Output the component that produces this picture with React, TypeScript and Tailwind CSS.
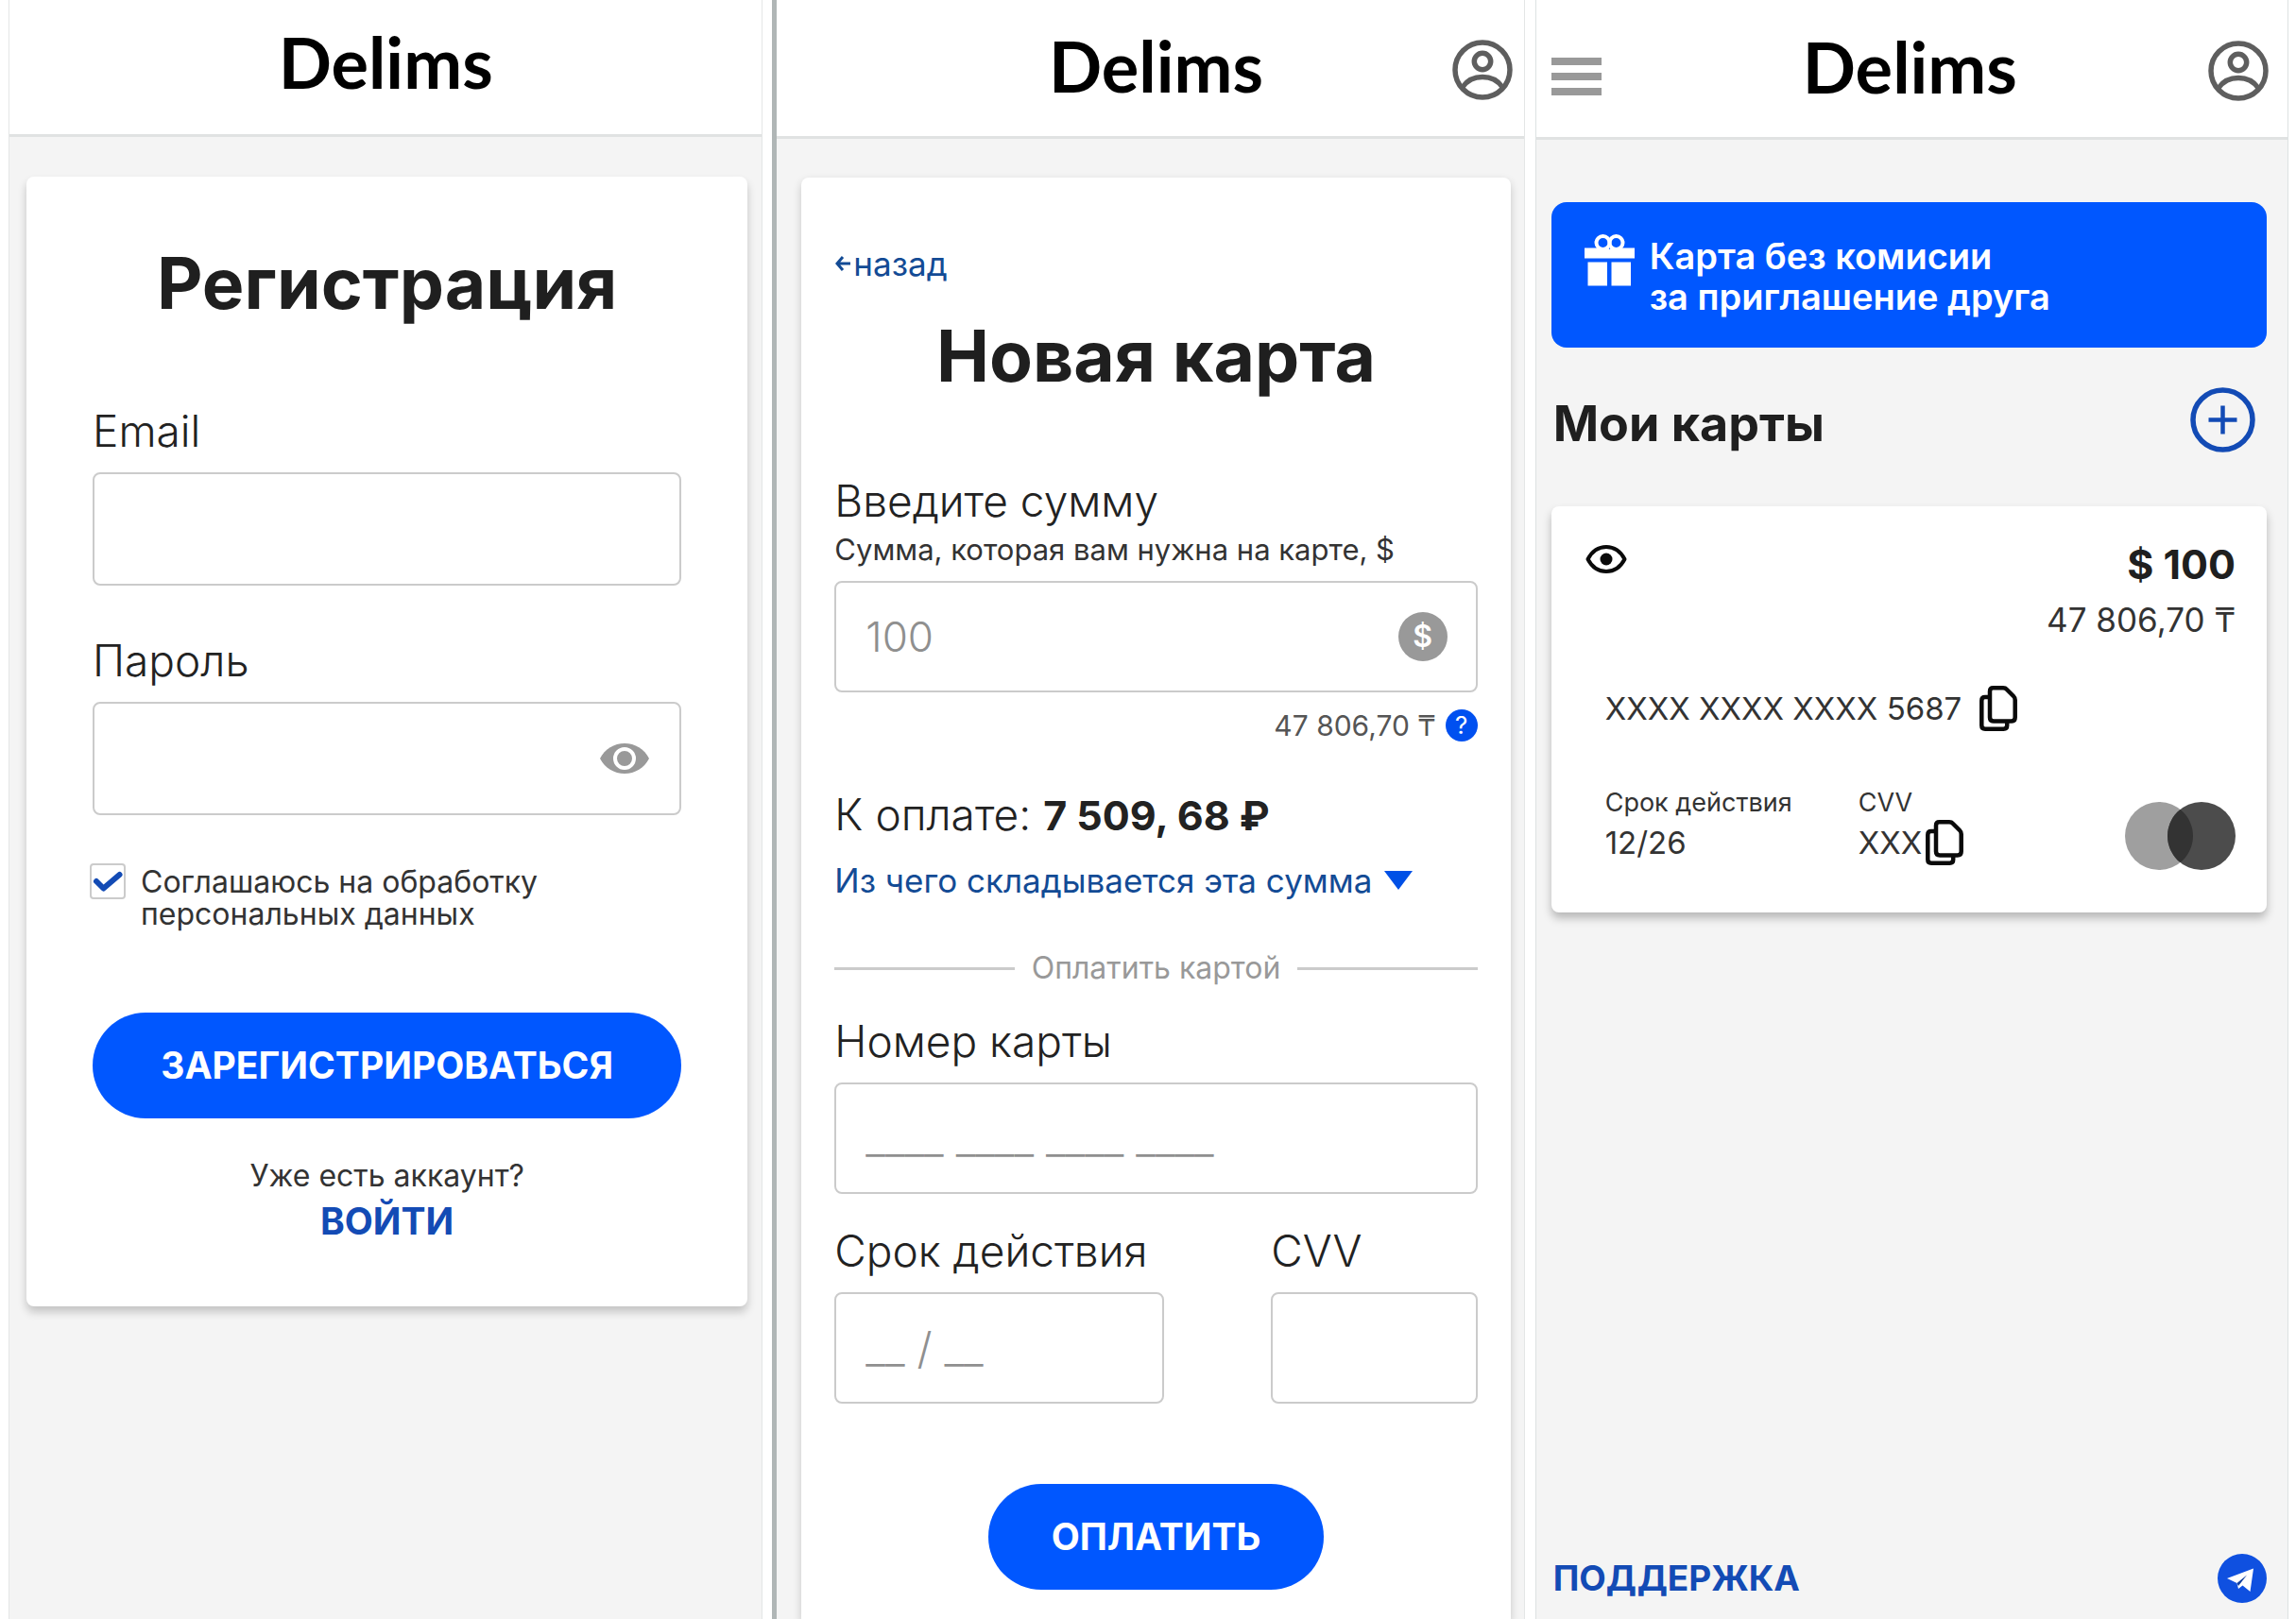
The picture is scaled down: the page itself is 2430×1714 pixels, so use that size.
import type { ReactNode } from "react";

const fieldClass =
  "block w-full rounded-lg border-2 border-[#cbcbcb] bg-white px-[31px] font-light text-[#222] outline-none placeholder:text-[#8f8f8f]";
const labelClass = "block text-[46px] leading-[56px] font-light text-[#222]";

function UserIcon() {
  return (
    <svg viewBox="0 0 64 64" className="size-16" fill="none" stroke="#5e5e5e" strokeWidth="5.5">
      <circle cx="32" cy="32" r="29" />
      <circle cx="32" cy="23" r="8.7" />
      <path d="M11 50C21 36 43 36 53 50" />
    </svg>
  );
}

function MenuIcon() {
  return (
    <svg viewBox="0 0 53 40" className="h-10 w-[53px]" fill="#999">
      <rect width="53" height="8" />
      <rect y="16" width="53" height="8" />
      <rect y="32" width="53" height="8" />
    </svg>
  );
}

function FilledEyeIcon() {
  return (
    <svg viewBox="0 0 52 32" className="h-8 w-[52px]">
      <path d="M0 16C5 6 15 0 26 0S47 6 52 16C47 26 37 32 26 32S5 26 0 16Z" fill="#999" />
      <circle cx="26" cy="16" r="10" fill="none" stroke="#fff" strokeWidth="4" />
    </svg>
  );
}

function EyeIcon() {
  return (
    <svg viewBox="0 0 44 32" className="h-8 w-11">
      <path
        d="M2.5 16C7 7.5 14 3 22 3S37 7.5 41.5 16C37 24.5 30 29 22 29S7 24.5 2.5 16Z"
        fill="none"
        stroke="#0a0a0a"
        strokeWidth="4"
        strokeLinejoin="round"
      />
      <circle cx="22" cy="16" r="6.5" fill="#0a0a0a" />
    </svg>
  );
}

function GiftIcon() {
  return (
    <svg viewBox="0 0 53 55" className="h-[55px] w-[53px] shrink-0" fill="#fff">
      <path d="M0 14.5H24.8L26.5 16L28.2 14.5H53V25.5H0Z" />
      <rect x="3.5" y="29.5" width="20.5" height="25" />
      <rect x="28.5" y="29.5" width="20.5" height="25" />
      <g fill="none" stroke="#fff" strokeWidth="4">
        <circle cx="19.5" cy="9" r="7" />
        <circle cx="33.5" cy="9" r="7" />
      </g>
    </svg>
  );
}

function CopyIcon() {
  return (
    <svg viewBox="0 0 40 48" className="h-12 w-10" fill="none" stroke="#0a0a0a" strokeWidth="4.5" strokeLinejoin="round">
      <path d="M14.5 2.3H25Q27.5 2.3 29 4L36 11Q37.7 12.7 37.7 15V33.5Q37.7 37.5 33.7 37.5H15Q11 37.5 11 33.5V6Q11 2.3 14.500 2.3Z" />
      <path d="M11 12H6Q2.3 12 2.3 15.700V42Q2.300 45.700 6 45.700H25.500Q29.200 45.700 29.200 42V38" />
    </svg>
  );
}

function CheckboxField({ children }: { children: ReactNode }) {
  return (
    <label className="mt-[51px] -ml-[3px] flex items-start gap-4">
      <span className="relative block size-[38px] shrink-0">
        <input
          type="checkbox"
          defaultChecked
          className="peer block size-full appearance-none rounded-sm border-2 border-[#cbcbcb] bg-white"
        />
        <svg
          viewBox="0 0 38 38"
          className="pointer-events-none absolute inset-0 hidden size-full peer-checked:block"
          fill="none"
          stroke="#134bb5"
          strokeWidth="6"
          strokeLinecap="round"
          strokeLinejoin="round"
        >
          <path d="M7 19L14.500 26.500L31.500 12" />
        </svg>
      </span>
      <span className="pt-[3px] text-[32px] leading-[34px] text-[#333]">{children}</span>
    </label>
  );
}

function Header({ left, right, className }: { left?: ReactNode; right?: ReactNode; className: string }) {
  return (
    <header className={`grid shrink-0 grid-cols-[1fr_auto_1fr] items-center border-b-[3px] border-[#e0e2e2] bg-white ${className}`}>
      <div>{left}</div>
      <div className="font-['Lato',sans-serif] text-[74px] leading-[88px] font-bold text-black">Delims</div>
      <div className="flex justify-end">{right}</div>
    </header>
  );
}

function RegistrationScreen() {
  return (
    <section className="flex min-w-0 flex-[798_1_0%] flex-col border-x border-[#e4e6e6] bg-[#f4f4f4]">
      <Header className="h-[145px] pb-[10px]" />
      <div className="mt-[42px] mr-[15px] ml-[18px] rounded-lg bg-white px-[70px] pt-[73px] pb-[66px] shadow-[0_6px_10px_rgba(0,0,0,0.2)]">
        <h1 className="text-center text-[75px] leading-[80px] font-bold whitespace-nowrap text-[#1f1f1f]">Регистрация</h1>
        <label htmlFor="email" className={`${labelClass} mt-[88px]`}>Email</label>
        <input id="email" type="email" className={`${fieldClass} mt-4 h-[120px] text-[44px]`} />
        <label htmlFor="password" className={`${labelClass} mt-[51px]`}>Пароль</label>
        <div className="relative mt-4">
          <input id="password" type="password" className={`${fieldClass} h-[120px] text-[44px]`} />
          <button type="button" aria-label="Показать пароль" className="absolute inset-y-0 right-[34px]">
            <FilledEyeIcon />
          </button>
        </div>
        <CheckboxField>
          Соглашаюсь на обработку
          <br />
          персональных данных
        </CheckboxField>
        <button
          type="button"
          className="mt-[87px] block h-28 w-full rounded-full bg-[#0057ff] text-[39px] font-bold whitespace-nowrap text-white"
        >
          ЗАРЕГИСТРИРОВАТЬСЯ
        </button>
        <p className="mt-[41px] text-center text-[32px] leading-[40px] text-[#333]">Уже есть аккаунт?</p>
        <p className="mt-1 text-center">
          <a href="#login" className="text-[39px] leading-[48px] font-bold text-[#134bb5]">ВОЙТИ</a>
        </p>
      </div>
    </section>
  );
}

function PaymentScreen() {
  return (
    <section className="flex min-w-0 flex-[792_1_0%] flex-col border-r border-[#e4e6e6] bg-[#f4f4f4]">
      <Header
        className="h-[147px] pr-3 pb-1 pl-6"
        right={
          <button type="button" aria-label="Профиль" className="mt-2">
            <UserIcon />
          </button>
        }
      />
      <div className="mt-[41px] mr-[14px] ml-[26px] flex grow flex-col rounded-t-lg bg-white px-[35px] pt-[66px] pb-8 shadow-[0_4px_10px_rgba(0,0,0,0.18)]">
        <a href="#back" className="self-start text-[35px] leading-[44px] text-[#134b95]">
          <span className="inline-flex items-center gap-[2px]">
            <svg viewBox="0 0 18 20" className="h-5 w-[18px]" fill="none" stroke="currentColor" strokeWidth="3">
              <path d="M9 3L3 10L9 17M3 10H17" />
            </svg>
            назад
          </span>
        </a>
        <h1 className="mt-9 text-center text-[75px] leading-[80px] font-bold whitespace-nowrap text-[#1f1f1f]">Новая карта</h1>
        <label htmlFor="amount" className={`${labelClass} mt-[85px]`}>Введите сумму</label>
        <p id="amount-hint" className="mt-1 text-[31px] leading-[40px] whitespace-nowrap text-[#333]">Сумма, которая вам нужна на карте, $</p>
        <div className="relative mt-[13px]">
          <input id="amount" aria-describedby="amount-hint" placeholder="100" className={`${fieldClass} h-[118px] text-[44px]`} />
          <span className="absolute inset-y-0 right-8 flex items-center">
            <span className="flex size-[52px] items-center justify-center rounded-full bg-[#999] text-[32px] font-semibold text-white">$</span>
          </span>
        </div>
        <div className="mt-[18px] flex items-center justify-end gap-[10px] text-[30px] leading-[34px] text-[#555]">
          47 806,70 ₸
          <button
            type="button"
            aria-label="Справка"
            className="flex size-[34px] items-center justify-center rounded-full bg-[#0050f0] text-[26px] leading-none text-white"
          >
            ?
          </button>
        </div>
        <p className={`${labelClass} mt-[49px] whitespace-nowrap`}>
          К оплате: <b className="text-[43px] font-bold">7 509, 68 ₽</b>
        </p>
        <button
          type="button"
          className="mt-[19px] flex items-center gap-[13px] self-start text-[35px] leading-[44px] whitespace-nowrap text-[#134b95]"
        >
          Из чего складывается эта сумма
          <svg viewBox="0 0 30 20" className="h-5 w-[30px]" fill="#0050e6">
            <path d="M0 0H30L15 20Z" />
          </svg>
        </button>
        <div className="mt-[51px] flex items-center gap-[18px] text-[32px] leading-[40px] text-[#999]">
          <span className="h-[3px] grow bg-[#cbcbcb]" />
          Оплатить картой
          <span className="h-[3px] grow bg-[#cbcbcb]" />
        </div>
        <label htmlFor="card-number" className={`${labelClass} mt-[29px]`}>Номер карты</label>
        <input id="card-number" placeholder="____ ____ ____ ____" className={`${fieldClass} mt-4 h-[118px] text-[46px]`} />
        <div className="mt-8 grid grid-cols-[350fr_219fr] gap-[113px]">
          <div>
            <label htmlFor="expiry" className={`${labelClass} whitespace-nowrap`}>Срок действия</label>
            <input id="expiry" placeholder="__ / __" className={`${fieldClass} mt-4 h-[118px] text-[46px]`} />
          </div>
          <div>
            <label htmlFor="cvv" className={labelClass}>CVV</label>
            <input id="cvv" className={`${fieldClass} mt-4 h-[118px] text-[46px]`} />
          </div>
        </div>
        <button
          type="button"
          className="mt-[85px] h-28 self-center rounded-full bg-[#0057ff] px-[67px] text-[39px] font-bold text-white"
        >
          ОПЛАТИТЬ
        </button>
      </div>
    </section>
  );
}

function CardsScreen() {
  return (
    <section className="ml-[11px] flex min-w-0 flex-[797_1_0%] flex-col border-x border-[#dde2e2] bg-[#f4f4f4]">
      <Header
        className="h-[148px] pr-5 pb-1 pl-4"
        left={
          <button type="button" aria-label="Меню" className="mt-5 block">
            <MenuIcon />
          </button>
        }
        right={
          <button type="button" aria-label="Профиль" className="mt-2">
            <UserIcon />
          </button>
        }
      />
      <main className="flex grow flex-col pr-[22px] pb-[18px] pl-4">
        <a
          href="#invite"
          className="mt-[66px] flex items-start gap-4 rounded-2xl bg-[#0057ff] pt-[34px] pr-8 pb-8 pl-[35px] text-[38px] leading-[43px] font-semibold text-white"
        >
          <GiftIcon />
          <span className="pt-[2px]">
            Карта без комисии
            <br />
            за приглашение друга
          </span>
        </a>
        <div className="mt-[42px] flex items-start justify-between pr-3 pl-[2px]">
          <h2 className="pt-[10px] text-[52px] leading-[57px] font-bold text-[#1f1f1f]">Мои карты</h2>
          <button type="button" aria-label="Добавить карту">
            <svg viewBox="0 0 69 69" className="size-[69px]" fill="none" stroke="#134bb5" strokeWidth="5.5">
              <circle cx="34.5" cy="34.5" r="31.5" />
              <path d="M34.500 19.500V49.500M19.500 34.500H49.500" strokeWidth="4.500" />
            </svg>
          </button>
        </div>
        <article className="mt-[57px] rounded-lg bg-white pt-9 pr-[33px] pb-[45px] pl-9 text-[#333] shadow-[0_6px_10px_rgba(0,0,0,0.25)]">
          <div className="flex items-start justify-between">
            <button type="button" aria-label="Показать данные карты" className="mt-1">
              <EyeIcon />
            </button>
            <div className="text-right">
              <div className="text-[43px] leading-[50px] font-bold text-[#1f1f1f]">$ 100</div>
              <div className="mt-3 text-[35px] leading-[44px]">47 806,70 ₸</div>
            </div>
          </div>
          <div className="mt-12 flex items-center gap-[19px] pl-[21px] text-[33px] leading-[48px]">
            XXXX XXXX XXXX 5687
            <button type="button" aria-label="Скопировать номер">
              <CopyIcon />
            </button>
          </div>
          <div className="mt-[60px] flex items-end justify-between pl-[21px]">
            <dl className="grid grid-cols-[268px_auto] pb-[5px]">
              <div>
                <dt className="text-[27px] leading-[32px]">Срок действия</dt>
                <dd className="mt-[2px] text-[33px] leading-[48px]">12/26</dd>
              </div>
              <div>
                <dt className="text-[27px] leading-[32px]">CVV</dt>
                <dd className="mt-[2px] flex items-center gap-1 text-[33px] leading-[48px]">
                  XXX
                  <button type="button" aria-label="Скопировать CVV">
                    <CopyIcon />
                  </button>
                </dd>
              </div>
            </dl>
            <svg viewBox="0 0 117 72" className="h-[72px] w-[117px]">
              <circle cx="36" cy="36" r="36" fill="#9f9f9f" />
              <circle cx="81" cy="36" r="36" fill="#4c4c4c" />
              <path d="M58.500 7.900A36 36 0 0 1 58.500 64.100A36 36 0 0 1 58.500 7.900Z" fill="#333" />
            </svg>
          </div>
        </article>
        <footer className="mt-auto flex items-center justify-between pl-[2px]">
          <a href="#support" className="text-[37px] leading-[48px] font-bold text-[#134bb5]">ПОДДЕРЖКА</a>
          <a href="#telegram" aria-label="Telegram">
            <svg viewBox="0 0 52 52" className="size-[52px]">
              <circle cx="26" cy="26" r="26" fill="#0f50e0" />
              <path d="M10 26L38 15.500L34.500 40L26.500 33.500L22 37L20.500 31Z" fill="#fff" />
              <path d="M20.500 31L31 22.500L22 34Z" fill="#123f9c" />
            </svg>
          </a>
        </footer>
      </main>
    </section>
  );
}

export default function App() {
  return (
    <div className="flex min-h-screen bg-white pr-2 pl-[9px] font-['Inter',sans-serif]">
      <RegistrationScreen />
      <div className="ml-[10px] w-[5px] shrink-0 bg-[#b0b6b6]" />
      <PaymentScreen />
      <CardsScreen />
    </div>
  );
}
